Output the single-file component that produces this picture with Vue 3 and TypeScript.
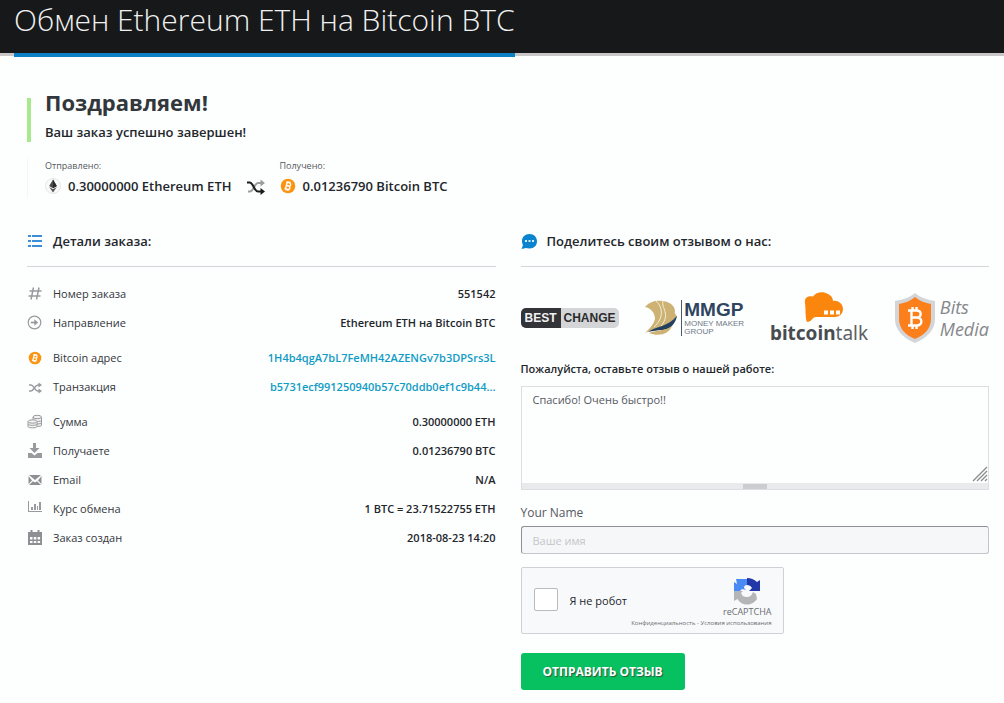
<script setup lang="ts">
import { ref } from 'vue'

type IconName = 'hash' | 'arrow' | 'btc' | 'shuffle' | 'coins' | 'download' | 'mail' | 'chart' | 'calendar'

interface Row {
  icon: IconName
  label: string
  value: string
  link?: boolean
}

const groups: Row[][] = [
  [
    { icon: 'hash', label: 'Номер заказа', value: '551542' },
    { icon: 'arrow', label: 'Направление', value: 'Ethereum ETH на Bitcoin BTC' },
  ],
  [
    { icon: 'btc', label: 'Bitcoin адрес', value: '1H4b4qgA7bL7FeMH42AZENGv7b3DPSrs3L', link: true },
    { icon: 'shuffle', label: 'Транзакция', value: 'b5731ecf991250940b57c70ddb0ef1c9b44...', link: true },
  ],
  [
    { icon: 'coins', label: 'Сумма', value: '0.30000000 ETH' },
    { icon: 'download', label: 'Получаете', value: '0.01236790 BTC' },
    { icon: 'mail', label: 'Email', value: 'N/A' },
    { icon: 'chart', label: 'Курс обмена', value: '1 BTC = 23.71522755 ETH' },
    { icon: 'calendar', label: 'Заказ создан', value: '2018-08-23 14:20' },
  ],
]

const review = ref('Спасибо! Очень быстро!!')
const name = ref('')
const human = ref(false)
</script>

<template>
  <header class="top">
    <h1>Обмен Ethereum ETH на Bitcoin BTC</h1>
  </header>

  <main class="page">
    <section class="congrats">
      <h2>Поздравляем!</h2>
      <p>Ваш заказ успешно завершен!</p>
    </section>

    <section class="exchange">
      <div class="side">
        <span class="caption">Отправлено:</span>
        <div class="amount">
          <svg width="16" height="16" viewBox="0 0 16 16" aria-hidden="true">
            <circle cx="8" cy="8" r="7.5" fill="#fafafa" stroke="#e6e6e6" />
            <path d="M8 1.5 4.2 8 8 10.2 11.8 8z" fill="#4a4a4a" />
            <path d="M8 1.5V10.2L11.8 8z" fill="#2c2c2c" />
            <path d="M4.2 9 8 14.5 11.8 9 8 11.2z" fill="#555" />
          </svg>
          <span>0.30000000 Ethereum ETH</span>
        </div>
      </div>
      <svg class="swap" width="18" height="16" viewBox="0 0 18 16" fill="none" aria-hidden="true">
        <path d="M1 12.5H3C6.500 12.500 7.500 4 11 4H14.500" stroke="#9c9c9c" stroke-width="2" />
        <path d="M13.5 0.500 18 4 13.500 7.500z" fill="#9c9c9c" />
        <path d="M0 3.500H2.500C6.500 3.500 7 12.500 11 12.500H14.500" stroke="#1b1b1b" stroke-width="2" />
        <path d="M13.500 9 18 12.500 13.500 16z" fill="#1b1b1b" />
      </svg>
      <div class="side">
        <span class="caption">Получено:</span>
        <div class="amount">
          <svg width="16" height="16" viewBox="0 0 16 16" aria-hidden="true">
            <circle cx="8" cy="8" r="7.3" fill="#fb9412" />
            <g transform="rotate(14 8 8)" stroke="#fff" stroke-width="1.4" fill="none">
              <path d="M6.3 4.5V11.5M5.3 4.7H8.6a1.6 1.6 0 0 1 0 3.2H6.3M8.6 7.9a1.7 1.7 0 0 1 0 3.4H5.3M7 3.2V4.6M9 3.2V4.6M7 11.4V12.8M9 11.4V12.8" />
            </g>
          </svg>
          <span>0.01236790 Bitcoin BTC</span>
        </div>
      </div>
    </section>

    <div class="columns">
      <section>
        <h3 class="heading">
          <svg width="16" height="14" viewBox="0 0 16 14" fill="#3c8fd6" aria-hidden="true">
            <path d="M1 1h3v2H1zM5 1h10v2H5zM1 6h3v2H1zM5 6h10v2H5zM1 11h3v2H1zM5 11h10v2H5z" />
          </svg>
          Детали заказа:
        </h3>
        <dl v-for="(group, g) in groups" :key="g" class="rows">
          <div v-for="row in group" :key="row.label" class="row">
            <dt>
              <svg width="16" height="16" viewBox="0 0 16 16" fill="none" stroke="#9a9a9e" aria-hidden="true">
                <path v-if="row.icon === 'hash'" d="M6.5 1.5 4 13.5M12 1.5 9.5 13.5M2.5 5H14.5M1.5 10H13.5" stroke-width="1.5" />
                <template v-else-if="row.icon === 'arrow'">
                  <circle cx="7.5" cy="7.5" r="6.3" stroke-width="1.2" />
                  <path d="M3.8 7.5H9" stroke-width="1.7" />
                  <path d="M7.3 4.2 11.2 7.5 7.3 10.8z" fill="#9a9a9e" stroke="none" />
                </template>
                <template v-else-if="row.icon === 'btc'">
                  <circle cx="8" cy="8" r="6.3" fill="#fb9412" stroke="none" />
                  <g transform="rotate(14 8 8)" stroke="#fff" stroke-width="1.2">
                    <path d="M6.5 5V11M5.6 5.2H8.4a1.3 1.3 0 0 1 0 2.7H6.5M8.4 7.9a1.4 1.4 0 0 1 0 2.9H5.6M7.2 4V5M8.8 4V5M7.2 11V12M8.8 11V12" />
                  </g>
                </template>
                <template v-else-if="row.icon === 'shuffle'">
                  <path d="M2 12H4C7 12 7.500 6 11 6H12.500M2 6H4C7 6 7.500 12 11 12H12.500" stroke-width="1.5" />
                  <path d="M11.5 3.500 15 6 11.500 8.500zM11.500 9.500 15 12 11.500 14.500z" fill="#9a9a9e" stroke="none" />
                </template>
                <template v-else-if="row.icon === 'coins'">
                  <g fill="#f2f2f2" stroke-width="1">
                    <path d="M6 3v8.500c0 1.200 8.500 1.200 8.500 0V3" />
                    <path d="M6 6.500c0 1.200 8.500 1.200 8.500 0M6 9c0 1.200 8.500 1.200 8.500 0" />
                    <ellipse cx="10.2" cy="3" rx="4.2" ry="1.700" />
                    <path d="M1 7.500v5c0 1.800 9 1.800 9 0v-5" />
                    <path d="M1 10c0 1.800 9 1.800 9 0" />
                    <ellipse cx="5.500" cy="7.500" rx="4.500" ry="1.700" />
                  </g>
                </template>
                <g v-else-if="row.icon === 'download'" fill="#9a9a9e" stroke="none">
                  <path d="M6 0H9V5H12.500L7.500 10 2.500 5H6z" />
                  <path d="M1 10H4.500L7.500 12.500 10.500 10H15V15H1z" />
                </g>
                <g v-else-if="row.icon === 'mail'" fill="#8f8f93" stroke="none">
                  <path d="M2 3H14L8 8z" />
                  <path d="M1.500 4 5 8.500 1.500 12zM14.500 4 11 8.500 14.500 12z" />
                  <path d="M2 13 6 9.200 8 10.600 10 9.200 14 13z" />
                </g>
                <g v-else-if="row.icon === 'chart'" fill="#9a9a9e" stroke="none">
                  <path d="M1 0H2V10H15V11H1z" />
                  <path d="M4 6H6V9H4zM7 3H9V9H7zM10 5H11V9H10zM12 1H14V9H12z" />
                </g>
                <g v-else fill="#8f8f93" stroke="none">
                  <path d="M1 2H15V5H1zM3.500 0H5.500V3H3.500zM10.500 0H12.500V3H10.500z" />
                  <path fill-rule="evenodd" d="M1 5H15V15H1zM3 7V9.500H5.500V7zM6.800 7V9.500H9.300V7zM10.600 7V9.500H13.100V7zM3 11V13H5.500V11zM6.800 11V13H9.300V11zM10.600 11V13H13.100V11z" />
                </g>
              </svg>
              {{ row.label }}
            </dt>
            <dd>
              <a v-if="row.link" href="#">{{ row.value }}</a>
              <template v-else>{{ row.value }}</template>
            </dd>
          </div>
        </dl>
      </section>

      <section>
        <h3 class="heading">
          <svg width="16" height="16" viewBox="0 0 16 16" aria-hidden="true">
            <path d="M8.500 0C4 0 1 3 1 7 1 8.500 1.300 10 2 11L.500 15 5 14C6 14.300 7 14.500 8.500 14.500 13 14.500 16 11.500 16 7.300 16 3.200 13 0 8.500 0z" fill="#0a84cf" />
            <path d="M4 6h2v2H4zM7.500 6h2v2h-2zM11 6h2v2h-2z" fill="#d6ecfa" />
          </svg>
          Поделитесь своим отзывом о нас:
        </h3>

        <div class="logos">
          <a class="best" href="#"><b>BEST</b><span>CHANGE</span></a>
          <a class="mmgp" href="#">
            <svg width="34" height="36" viewBox="0 0 34 36" aria-hidden="true">
              <path d="M1 7C6 1 13 0 19 1 26 2 31 6 31 11 30 14 33 15 33 17 29 22 24 26 18 27 12 28 6 31 1 33 6 28 10 24 11 19 11 13 7 8 1 7z" fill="#cdb274" />
              <path d="M12 1C19 7 20 18 10 27M19 1C17 8 27 14 17 26" fill="none" stroke="#f4eedc" stroke-width="1" />
              <path d="M4 32C12 26 24 27 33 16 31 25 26 29 19 30 13 30 9 31 4 32z" fill="#24405f" />
              <path d="M5 33C13 30 22 31 28 26 25 34 15 37 5 33z" fill="#cdb274" />
            </svg>
            <span class="mmgp-text">
              <b>MMGP</b>
              <span>MONEY MAKER</span>
              <span>GROUP</span>
            </span>
          </a>
          <a class="talk" href="#">
            <svg width="40" height="30" viewBox="0 0 40 30" aria-hidden="true">
              <path d="M1 11C0 6 4 3.500 9 4.500 12 0 19-1 24 2 28 4 29 7 29 9 33 8 39 11 39 17 39 22 35 25 31 25H12C8 25 8 30 3 30 1 26 2 18 1 11z" fill="#fb860d" />
              <path d="M20 18.500h4v4h-4zM26 18.500h4v4h-4zM32 18.500h4v4h-4z" fill="#fff" />
            </svg>
            <span class="talk-text"><b>bitcoin</b>talk</span>
          </a>
          <a class="bits" href="#">
            <svg width="42" height="50" viewBox="0 0 42 50" aria-hidden="true">
              <path d="M21 0C27 5 34 7 41 8V26C41 37 33 45 21 50 9 45 1 37 1 26V8C8 7 15 5 21 0z" fill="#d3d5d9" />
              <path d="M21 4C26 8 31 10 37 11V26C37 35 31 42 21 46 11 42 5 35 5 26V11C11 10 16 8 21 4z" fill="#fb7f1a" />
              <path d="M17.500 17V33M14 17.500H22.500C28 17.500 28 24.500 22.500 24.500H17.500M22.500 24.500C29 24.500 29 32.500 22.500 32.500H14M18.500 14V18M22.500 14V18M18.500 32V36M22.500 32V36" fill="none" stroke="#fff" stroke-width="2.400" />
            </svg>
            <span class="bits-text"><span>Bits</span><span>Media</span></span>
          </a>
        </div>

        <form @submit.prevent>
          <label class="ask" for="review">Пожалуйста, оставьте отзыв о нашей работе:</label>
          <div class="area">
            <textarea id="review" v-model="review"></textarea>
            <svg class="corner" width="16" height="16" viewBox="0 0 16 16" stroke="#8a8a8a" stroke-width="1.300" aria-hidden="true">
              <path d="M1 15 15 1M5 15 15 5M9 15 15 9M13 15 15 13" />
            </svg>
            <div class="grip"><i></i></div>
          </div>
          <label class="name-label" for="name">Your Name</label>
          <input id="name" v-model="name" class="name" type="text" placeholder="Ваше имя" />

          <div class="captcha">
            <label class="robot"><input v-model="human" type="checkbox" />Я не робот</label>
            <div class="brand">
              <svg width="28" height="28" viewBox="0 0 28 28" aria-hidden="true">
                <path d="M1 14 1 5 4 7 3 2H14V8C12 8 11 9 11 11L13 13 9 12 7 14z" fill="#4a8af4" />
                <path d="M14 1C18 1 21 2.500 24 5L27 3V14H16L19 11C18 9 16 8 14 8z" fill="#2238a8" />
                <path d="M1 14H10L8 16C9 19 11 20 14 20 17 20 19 18 20 15L23 17 24 22C21 26 18 27.500 14 27.500 10 27.500 7 26 4.500 22L1 24z" fill="#b5b5b8" />
              </svg>
              <span>reCAPTCHA</span>
            </div>
            <div class="legal"><a href="#">Конфиденциальность</a> - <a href="#">Условия использования</a></div>
          </div>

          <button class="send" type="submit">ОТПРАВИТЬ ОТЗЫВ</button>
        </form>
      </section>
    </div>
  </main>
</template>

<style>
body {
  background: #fdfefe;
}
</style>

<style scoped>
.top,
.page {
  font-family: "Open Sans", "Noto Sans", sans-serif;
  color: #22262b;
}
h1, h2, h3, p, dl, dd {
  margin: 0;
}
a {
  text-decoration: none;
}
svg {
  flex: none;
  display: block;
}
.top {
  display: flex;
  height: 53px;
  padding: 0 14px;
  background: #17181a;
  border-bottom: 3px solid #c9c6c8;
}
h1 {
  height: 53px;
  font-size: 30px;
  line-height: 40px;
  font-weight: 300;
  color: #f1f1f1;
  border-bottom: 4px solid #0b80c4;
  white-space: nowrap;
}
.page {
  padding: 42px 15px 12px 27px;
}
.congrats {
  display: flex;
  flex-direction: column;
  height: 44px;
  padding-left: 14px;
  border-left: 4px solid #a9e98d;
}
h2 {
  margin-top: -8px;
  font-size: 22px;
  line-height: 24px;
  font-weight: 700;
  color: #32373c;
}
.congrats p {
  margin-top: 8px;
  font-size: 13px;
  line-height: 20px;
  font-weight: 600;
}
.exchange {
  display: flex;
  align-items: flex-end;
  gap: 15px;
  margin-top: 16px;
  padding-left: 17px;
  border-left: 1px solid #f5f6f6;
}
.caption {
  display: block;
  font-size: 9px;
  line-height: 16px;
  color: #55595d;
}
.amount {
  display: flex;
  align-items: center;
  gap: 7px;
  height: 24px;
  font-size: 13px;
  font-weight: 600;
}
.swap {
  margin-bottom: 3px;
}
.columns {
  display: grid;
  grid-template-columns: 1fr 1fr;
  gap: 25px;
  margin-top: 26px;
}
.heading {
  display: flex;
  align-items: flex-start;
  gap: 10px;
  box-sizing: border-box;
  height: 43px;
  padding-top: 7px;
  font-size: 13px;
  font-weight: 600;
  line-height: 20px;
  border-bottom: 1px solid #d3d5da;
}
.heading svg {
  margin-top: 3px;
}
.rows {
  margin-top: 6px;
}
.heading + .rows {
  margin-top: 12px;
}
.row {
  display: flex;
  justify-content: space-between;
  align-items: center;
  height: 29px;
}
dt {
  display: flex;
  align-items: center;
  gap: 10px;
  font-size: 11px;
  color: #33373c;
}
dd {
  font-size: 11px;
  font-weight: 600;
}
dd a {
  color: #0f9cc4;
}
.logos {
  display: flex;
  justify-content: space-between;
  align-items: center;
  height: 50px;
  margin-top: 26px;
}
.best {
  display: flex;
  height: 20px;
  border-radius: 5px;
  overflow: hidden;
  font: 700 12px/20px "Liberation Sans", Arial, sans-serif;
  color: #2b2c2e;
  background: #d4d5d7;
}
.best b {
  background: #333437;
  color: #f2f2f2;
  padding: 0 4px;
}
.best span {
  padding: 0 3px;
}
.mmgp {
  display: flex;
  align-items: center;
  gap: 3px;
}
.mmgp-text {
  display: flex;
  flex-direction: column;
  border-left: 1px solid #4a5a70;
  padding-left: 2px;
  font-family: "Liberation Sans", Arial, sans-serif;
  font-size: 8px;
  line-height: 8px;
  color: #6f7a88;
}
.mmgp-text b {
  font-size: 19px;
  line-height: 20px;
  color: #2f455f;
}
.talk {
  display: flex;
  flex-direction: column;
  align-items: center;
}
.talk svg {
  margin-left: 10px;
}
.talk-text {
  font-family: "Noto Sans", sans-serif;
  font-size: 19px;
  line-height: 22px;
  color: #5d6064;
}
.talk-text b {
  color: #484b4f;
}
.bits {
  display: flex;
  align-items: center;
  gap: 4px;
}
.bits-text {
  display: flex;
  flex-direction: column;
  font-family: "Open Sans", "Noto Sans", sans-serif;
  font-style: italic;
  font-weight: 500;
  font-size: 18px;
  line-height: 22px;
  color: #85878b;
}
.ask {
  display: block;
  margin-top: 16px;
  font-size: 11px;
  line-height: 20px;
  font-weight: 600;
}
.area {
  position: relative;
  margin-top: 7px;
}
textarea {
  display: block;
  box-sizing: border-box;
  width: 100%;
  height: 97px;
  resize: none;
  border: 1px solid #dcdee2;
  border-bottom: 0;
  padding: 4px 11px;
  background: #fdfefe;
  font: 11px/18px "Open Sans", "Noto Sans", sans-serif;
  color: #55595e;
}
.corner {
  position: absolute;
  right: 1px;
  bottom: 8px;
}
.grip {
  display: flex;
  justify-content: center;
  align-items: center;
  height: 7px;
  background: #e9eaec;
  border: 1px solid #dcdee2;
  border-top: 0;
  box-sizing: border-box;
}
.grip i {
  width: 24px;
  height: 5px;
  background: #cccdd0;
}
.name-label {
  display: block;
  margin-top: 14px;
  font-size: 12px;
  line-height: 18px;
  color: #55595e;
}
.name {
  display: block;
  box-sizing: border-box;
  width: 100%;
  height: 28px;
  margin-top: 4px;
  padding: 0 11px;
  border: 1px solid #c3c5c9;
  border-top-color: #8e9094;
  border-left-color: #8e9094;
  border-radius: 3px;
  background: #f6f7f9;
  font: 11px "Open Sans", "Noto Sans", sans-serif;
}
.name::placeholder {
  color: #c4c6ca;
}
.captcha {
  display: grid;
  grid-template-columns: 1fr auto;
  align-content: start;
  box-sizing: border-box;
  width: 263px;
  height: 67px;
  margin-top: 13px;
  padding: 9px 11px 0 12px;
  border: 1px solid #cfd1d6;
  border-radius: 2px;
  background: #f8f9fb;
}
.robot {
  display: flex;
  align-items: flex-end;
  gap: 12px;
  padding-bottom: 8px;
  font-size: 11px;
  line-height: 20px;
}
.robot input {
  appearance: none;
  box-sizing: border-box;
  width: 24px;
  height: 23px;
  margin: 0;
  border: 1px solid #b9bbbf;
  border-radius: 2px;
  background: #fff;
}
.brand {
  display: flex;
  flex-direction: column;
  align-items: center;
  font: 9px/14px "Open Sans", "Noto Sans", sans-serif;
  color: #6a6c70;
}
.legal {
  grid-column: 1 / 3;
  text-align: right;
  font: 6px/8px "Open Sans", "Noto Sans", sans-serif;
  color: #6a6c70;
}
.legal a {
  color: inherit;
}
.send {
  display: block;
  margin-top: 19px;
  height: 37px;
  padding: 0 22px;
  border: 0;
  border-radius: 3px;
  background: #07c160;
  color: #fff;
  font: 700 12px "Open Sans", "Noto Sans", sans-serif;
  text-shadow: 1px 1px 1px #2c5a3a;
}
</style>
